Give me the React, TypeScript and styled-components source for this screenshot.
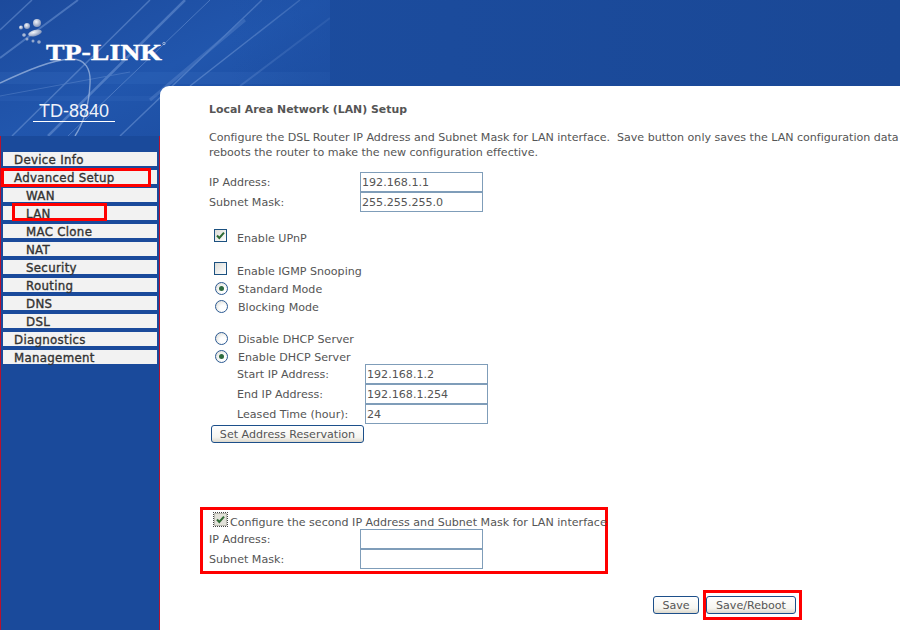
import React from "react";
import styled, { createGlobalStyle } from "styled-components";

const GlobalStyle = createGlobalStyle`
  html, body {
    margin: 0;
    padding: 0;
    width: 900px;
    height: 630px;
    overflow: hidden;
    background: #1a4a9b;
    font-family: "DejaVu Sans", "Liberation Sans", sans-serif;
  }
`;

const Page = styled.div`
  position: relative;
  display: grid;
  grid-template-columns: 160px 740px;
  width: 900px;
  height: 630px;
  overflow: hidden;
  background: linear-gradient(90deg, #1c4ea2 0%, #1a4896 100%);
`;

const BannerArt = styled.svg`
  position: absolute;
  left: 0;
  top: 0;
`;

const Sidebar = styled.nav`
  position: relative;
  box-sizing: border-box;
  margin-top: 136px;
  padding: 16px 2px 0;
  border-left: 1px solid #b5122f;
  border-right: 1px solid #b5122f;
  background: #1a4a9b;
  display: flex;
  flex-direction: column;
  gap: 4px;
`;

const NavItem = styled.div<{ $sub?: boolean }>`
  position: relative;
  height: 14px;
  line-height: 17px;
  padding-left: ${(p) => (p.$sub ? 23 : 11)}px;
  background: #f2f2f2;
  color: #333;
  font-size: 11.8px;
  font-weight: 400;
  -webkit-text-stroke: 0.35px #333;
  letter-spacing: 0.3px;
  white-space: nowrap;
`;

const NavMark = styled.span<{ $left: number; $top: number; $width: number; $height: number }>`
  position: absolute;
  left: ${(p) => p.$left}px;
  top: ${(p) => p.$top}px;
  width: ${(p) => p.$width}px;
  height: ${(p) => p.$height}px;
  box-sizing: border-box;
  border: 3px solid #f00;
`;

const Panel = styled.main`
  position: relative;
  box-sizing: border-box;
  margin-top: 86px;
  height: 544px;
  padding: 16px 0 0 49px;
  background: #fff;
  border-top-left-radius: 9px;
  color: #555;
  font-size: 11.1px;
  overflow: hidden;
`;

const Title = styled.h1`
  margin: 0;
  font-size: 10.9px;
  line-height: 16px;
  font-weight: 700;
  color: #555;
`;

const Intro = styled.p`
  margin: 12px 0 0;
  line-height: 15px;
  letter-spacing: -0.025px;
  white-space: pre;
`;

const Fields = styled.div<{ $top?: number; $indent?: number; $labelWidth?: number }>`
  margin-top: ${(p) => p.$top ?? 0}px;
  margin-left: ${(p) => p.$indent ?? 0}px;
  display: grid;
  grid-template-columns: ${(p) => p.$labelWidth ?? 151}px 123px;
  grid-auto-rows: 20px;
  align-items: center;
`;

const FieldInput = styled.input`
  box-sizing: border-box;
  width: 123px;
  height: 20px;
  margin: 0;
  padding: 0 0 0 1px;
  border: 1px solid #7f9db9;
  border-radius: 0;
  outline: none;
  background: #fff;
  color: #555;
  font-family: inherit;
  font-size: 11.1px;
`;

const OptionRow = styled.div<{ $top?: number }>`
  display: flex;
  align-items: flex-start;
  height: 18px;
  line-height: 20px;
  margin-top: ${(p) => p.$top ?? 0}px;
  margin-left: 5px;
  white-space: nowrap;
`;

const CheckBox = styled.span<{ $dim?: boolean }>`
  box-sizing: border-box;
  display: inline-flex;
  align-items: center;
  justify-content: center;
  flex: none;
  width: 13px;
  height: 13px;
  margin-right: ${(p) => (p.$dim ? 3 : 10)}px;
  border: 1px solid ${(p) => (p.$dim ? "#b9b9b0" : "#1c5180")};
  background: ${(p) => (p.$dim ? "#e3e2da" : "linear-gradient(135deg, #dcdcd7 0%, #fff 100%)")};
  outline: ${(p) => (p.$dim ? "1px dotted #444" : "none")};
`;

const Radio = styled.span`
  box-sizing: border-box;
  display: inline-flex;
  align-items: center;
  justify-content: center;
  flex: none;
  width: 13px;
  height: 13px;
  margin: 2px 10px 0 1px;
  border: 1px solid #2c5a93;
  border-radius: 50%;
  background: radial-gradient(circle at 65% 65%, #fff 30%, #d6d6ce 100%);
`;

const RadioDot = styled.span`
  width: 5px;
  height: 5px;
  border-radius: 50%;
  background: #2f6b3f;
`;

const ActionButton = styled.button`
  box-sizing: border-box;
  height: 18px;
  margin: 0;
  padding: 1px 0 0;
  border: 1px solid #1c4f8a;
  border-radius: 3px;
  background: linear-gradient(180deg, #fff 0%, #f6f5f0 70%, #dcd8cc 100%);
  color: #555;
  font-family: inherit;
  font-size: 11.1px;
  line-height: 15px;
`;

const ReservationButton = styled(ActionButton)`
  display: block;
  width: 153px;
  margin: 1px 0 0 2px;
`;

const SecondBox = styled.section`
  box-sizing: border-box;
  width: 408px;
  height: 67px;
  margin: 64px 0 0 -9px;
  padding: 3px 0 0 6px;
  border: 3px solid #f00;
`;

const SecondHead = styled(OptionRow)`
  margin-bottom: -2px;
`;

const Footer = styled.div`
  display: flex;
  gap: 7px;
  margin: 22px 0 0 444px;
`;

const SaveButton = styled(ActionButton)`
  width: 46px;
`;

const RebootWrap = styled.span`
  position: relative;
  display: inline-block;
  width: 90px;
  height: 18px;
`;

const RebootButton = styled(ActionButton)`
  width: 90px;
`;

const RebootMark = styled.span`
  position: absolute;
  left: -3px;
  top: -6px;
  right: -6px;
  bottom: -6px;
  border: 3px solid #f00;
`;

const Check = () => (
  <svg width="9" height="9" viewBox="0 0 9 9">
    <path d="M1 4.5 L3.3 7 L8 1.6" fill="none" stroke="#2f6b34" strokeWidth="2" />
  </svg>
);

const Banner = () => (
  <BannerArt width="330" height="136" viewBox="0 0 330 136">
    <defs>
      <linearGradient id="sky" x1="0" y1="0" x2="1" y2="1">
        <stop offset="0" stopColor="#1c4a9c" />
        <stop offset="0.5" stopColor="#2156ad" />
        <stop offset="1" stopColor="#1b4b9e" />
      </linearGradient>
      <linearGradient id="fade" x1="0" y1="0" x2="1" y2="0">
        <stop offset="0" stopColor="#1c4ea2" stopOpacity="0" />
        <stop offset="1" stopColor="#1c4ea2" stopOpacity="0.5" />
      </linearGradient>
      <radialGradient id="ball" cx="0.4" cy="0.35" r="0.7">
        <stop offset="0" stopColor="#f4f6fb" />
        <stop offset="1" stopColor="#7c8fb6" />
      </radialGradient>
    </defs>
    <rect width="330" height="136" fill="url(#sky)" />
    <rect y="72" width="330" height="12" fill="#3a70c4" opacity="0.22" />
    <rect y="96" width="330" height="5" fill="#3a70c4" opacity="0.2" />
    <g fill="none" stroke="#7fa4de" opacity="0.45">
      <path d="M0 30 L32 0" strokeWidth="1.5" />
      <path d="M0 58 L78 0" strokeWidth="2" />
      <path d="M12 136 L150 0" strokeWidth="1.5" />
      <path d="M48 136 L185 0" strokeWidth="2.5" />
      <path d="M68 136 L210 0" strokeWidth="1" />
      <path d="M120 136 L262 0" strokeWidth="1.5" />
      <path d="M150 100 L245 20" strokeWidth="3" opacity="0.6" />
      <path d="M190 86 L300 0" strokeWidth="1.5" />
      <path d="M240 86 L330 18" strokeWidth="2" opacity="0.6" />
      <path d="M0 96 L130 72" strokeWidth="1" opacity="0.7" />
    </g>
    <rect x="230" width="100" height="136" fill="url(#fade)" />
    <path d="M0 83 C28 70 52 60 70 59 C86 58 91 70 90 84 C89 104 84 122 75 136" fill="none" stroke="#9db7df" strokeWidth="1.4" opacity="0.75" />
    <circle cx="37" cy="23" r="4" fill="url(#ball)" />
    <circle cx="27" cy="26" r="3" fill="url(#ball)" />
    <circle cx="21" cy="27.5" r="2" fill="url(#ball)" />
    <ellipse cx="35" cy="33" rx="7" ry="3" fill="url(#ball)" transform="rotate(-15 35 33)" />
    <circle cx="24" cy="35" r="1.8" fill="#a9b9d6" />
    <circle cx="27" cy="39" r="1.5" fill="#94a8cc" />
    <circle cx="33" cy="41" r="1.5" fill="#94a8cc" />
    <circle cx="39" cy="42" r="1.8" fill="#94a8cc" />
    <text x="46" y="60" fontFamily="'Liberation Serif', serif" fontWeight="700" fontSize="24" fill="#fff" stroke="#fff" strokeWidth="0.4" textLength="116" lengthAdjust="spacingAndGlyphs">TP-LINK</text>
    <circle cx="164" cy="43.5" r="1.2" fill="none" stroke="#dfe6f3" strokeWidth="0.6" />
    <text x="39" y="117" fontFamily="'Liberation Sans', sans-serif" fontSize="18" fill="#eef2fa" textLength="70">TD-8840</text>
    <rect x="33" y="121" width="82" height="1" fill="#fff" />
  </BannerArt>
);

const menu = [
  { label: "Device Info" },
  { label: "Advanced Setup", mark: { left: -2, top: -2, width: 150, height: 19 } },
  { label: "WAN", sub: true },
  { label: "LAN", sub: true, mark: { left: 9, top: -3, width: 95, height: 18 } },
  { label: "MAC Clone", sub: true },
  { label: "NAT", sub: true },
  { label: "Security", sub: true },
  { label: "Routing", sub: true },
  { label: "DNS", sub: true },
  { label: "DSL", sub: true },
  { label: "Diagnostics" },
  { label: "Management" },
];

export default function App() {
  return (
    <Page>
      <GlobalStyle />
      <Banner />
      <Sidebar>
        {menu.map((item) => (
          <NavItem key={item.label} $sub={item.sub}>
            {item.label}
            {item.mark && (
              <NavMark $left={item.mark.left} $top={item.mark.top} $width={item.mark.width} $height={item.mark.height} />
            )}
          </NavItem>
        ))}
      </Sidebar>
      <Panel>
        <Title>Local Area Network (LAN) Setup</Title>
        <Intro>
          {"Configure the DSL Router IP Address and Subnet Mask for LAN interface.  Save button only saves the LAN configuration data\nreboots the router to make the new configuration effective."}
        </Intro>

        <Fields $top={12}>
          <span>IP Address:</span>
          <FieldInput readOnly value="192.168.1.1" />
          <span>Subnet Mask:</span>
          <FieldInput readOnly value="255.255.255.0" />
        </Fields>

        <OptionRow $top={17}>
          <CheckBox><Check /></CheckBox>
          Enable UPnP
        </OptionRow>
        <OptionRow $top={15}>
          <CheckBox />
          Enable IGMP Snooping
        </OptionRow>
        <OptionRow>
          <Radio><RadioDot /></Radio>
          Standard Mode
        </OptionRow>
        <OptionRow>
          <Radio />
          Blocking Mode
        </OptionRow>
        <OptionRow $top={14}>
          <Radio />
          Disable DHCP Server
        </OptionRow>
        <OptionRow>
          <Radio><RadioDot /></Radio>
          Enable DHCP Server
        </OptionRow>

        <Fields $top={-2} $indent={28} $labelWidth={128}>
          <span>Start IP Address:</span>
          <FieldInput readOnly value="192.168.1.2" />
          <span>End IP Address:</span>
          <FieldInput readOnly value="192.168.1.254" />
          <span>Leased Time (hour):</span>
          <FieldInput readOnly value="24" />
        </Fields>
        <ReservationButton>Set Address Reservation</ReservationButton>

        <SecondBox>
          <SecondHead>
            <CheckBox $dim><Check /></CheckBox>
            Configure the second IP Address and Subnet Mask for LAN interface
          </SecondHead>
          <Fields>
            <span>IP Address:</span>
            <FieldInput readOnly value="" />
            <span>Subnet Mask:</span>
            <FieldInput readOnly value="" />
          </Fields>
        </SecondBox>

        <Footer>
          <SaveButton>Save</SaveButton>
          <RebootWrap>
            <RebootButton>Save/Reboot</RebootButton>
            <RebootMark />
          </RebootWrap>
        </Footer>
      </Panel>
    </Page>
  );
}
